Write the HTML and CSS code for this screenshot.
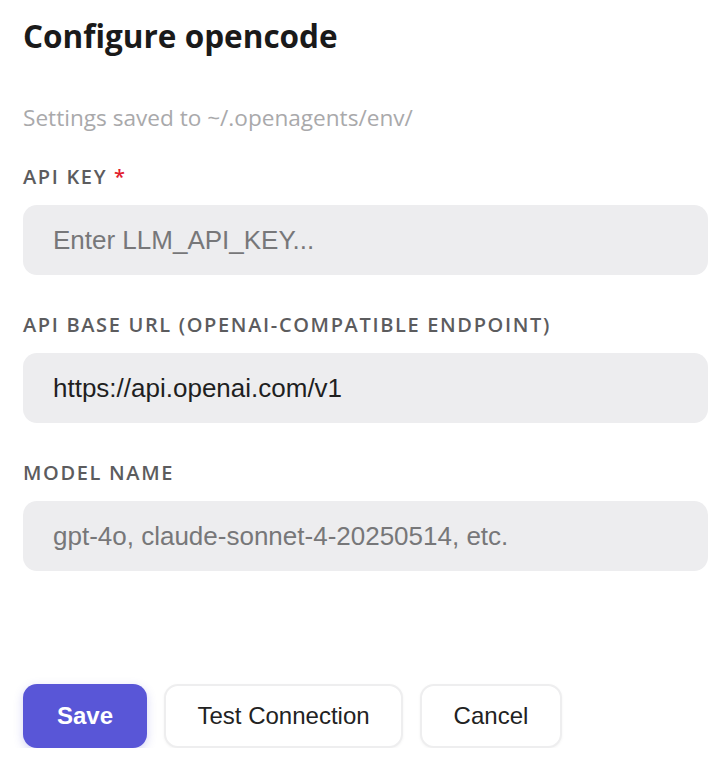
FILE: index.html
```html
<!DOCTYPE html>
<html lang="en">
<head>
<meta charset="utf-8">
<title>Configure opencode</title>
<link rel="stylesheet" href="styles.css">
</head>
<body>
<div class="panel">
  <h1 class="title">Configure opencode</h1>
  <p class="subtitle">Settings saved to ~/.openagents/env/</p>
  <div class="fields">
    <div class="field">
      <label class="label">API KEY <span class="req">*</span></label>
      <input class="input" type="text" placeholder="Enter LLM_API_KEY...">
    </div>
    <div class="field">
      <label class="label">API BASE URL (OPENAI-COMPATIBLE ENDPOINT)</label>
      <input class="input" type="text" value="https://api.openai.com/v1">
    </div>
    <div class="field">
      <label class="label">MODEL NAME</label>
      <input class="input" type="text" placeholder="gpt-4o, claude-sonnet-4-20250514, etc.">
    </div>
  </div>
  <div class="actions">
    <button class="btn btn-primary">Save</button>
    <button class="btn btn-secondary">Test Connection</button>
    <button class="btn btn-secondary">Cancel</button>
  </div>
</div>
</body>
</html>
```
FILE: styles.css
```css
html, body {
  margin: 0;
  padding: 0;
  background: #ffffff;
}
.panel {
  padding: 14px 10px 0 23px;
  font-family: "Open Sans", "Noto Sans", sans-serif;
}
.title {
  margin: 0;
  font-size: 31.5px;
  line-height: 44px;
  font-weight: 700;
  color: #1a1a1a;
}
.subtitle {
  margin: 45px 0 0;
  font-size: 22.6px;
  line-height: 30px;
  color: #a9a9ab;
}
.fields {
  display: flex;
  flex-direction: column;
  gap: 36px;
  margin-top: 30px;
}
.field {
  display: flex;
  flex-direction: column;
  gap: 14px;
}
.label {
  font-size: 20px;
  line-height: 28px;
  font-weight: 600;
  letter-spacing: 1.65px;
  color: #5c5c5e;
}
.req {
  color: #e11d2e;
}
.input {
  box-sizing: border-box;
  height: 70px;
  width: 685px;
  border: none;
  outline: none;
  border-radius: 14px;
  background: #ededef;
  padding: 0 30px;
  font-family: "Liberation Sans", Arial, sans-serif;
  font-size: 26px;
  color: #1f1f1f;
}
.input::placeholder {
  color: #777779;
}
.actions {
  display: flex;
  gap: 17px;
  margin-top: 113px;
}
.btn {
  box-sizing: border-box;
  height: 64px;
  border-radius: 14px;
  font-family: "Liberation Sans", Arial, sans-serif;
  font-size: 24px;
  cursor: pointer;
}
.btn-primary {
  width: 124px;
  border: none;
  background: #5956d7;
  color: #ffffff;
  font-weight: 700;
  box-shadow: 0 3px 10px rgba(89, 86, 215, 0.25);
}
.btn-secondary {
  background: #ffffff;
  border: 2px solid #eeeeef;
  color: #222222;
  padding: 0 31.5px;
  box-shadow: 0 1px 3px rgba(0, 0, 0, 0.05);
}
```
